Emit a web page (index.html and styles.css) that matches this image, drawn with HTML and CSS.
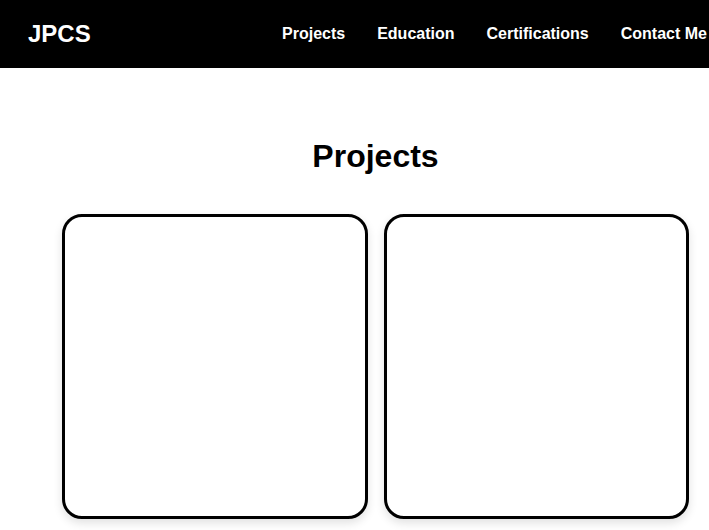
FILE: index.html
```html
<!DOCTYPE html>
<html lang="en">
<head>
<meta charset="utf-8">
<title>JPCS</title>
<link rel="stylesheet" href="styles.css">
</head>
<body>
<div class="page">
  <header class="navbar">
    <div class="logo">JPCS</div>
    <nav class="nav-links">
      <a href="#projects">Projects</a>
      <a href="#education">Education</a>
      <a href="#certifications">Certifications</a>
      <a href="#contact">Contact Me</a>
    </nav>
  </header>
  <section class="projects" id="projects">
    <h2 class="section-title">Projects</h2>
    <div class="cards">
      <div class="card"></div>
      <div class="card"></div>
    </div>
  </section>
</div>
</body>
</html>
```

FILE: styles.css
```css
* { box-sizing: border-box; }
html, body { margin: 0; padding: 0; background: #fff; }
body {
  font-family: "Liberation Sans", Arial, sans-serif;
  color: #000;
}
.page {
  width: 751px;
}
.navbar {
  height: 68px;
  background: #000;
  display: flex;
  align-items: center;
  justify-content: space-between;
  padding: 0 28px;
}
.logo {
  color: #fff;
  font-weight: bold;
  font-size: 24px;
}
.nav-links {
  display: flex;
}
.nav-links a {
  color: #fff;
  text-decoration: none;
  font-weight: bold;
  font-size: 16px;
  padding: 0 16px;
}
.projects {
  padding: 70px 62px 40px;
}
.section-title {
  margin: 0 0 39px;
  text-align: center;
  font-size: 32px;
  font-weight: bold;
}
.cards {
  display: grid;
  grid-template-columns: 1fr 1fr;
  gap: 16px;
}
.card {
  height: 305px;
  border: 3px solid #000;
  border-radius: 20px;
  background: #fff;
  box-shadow: 0 4px 10px rgba(0, 0, 0, 0.12);
}
```
